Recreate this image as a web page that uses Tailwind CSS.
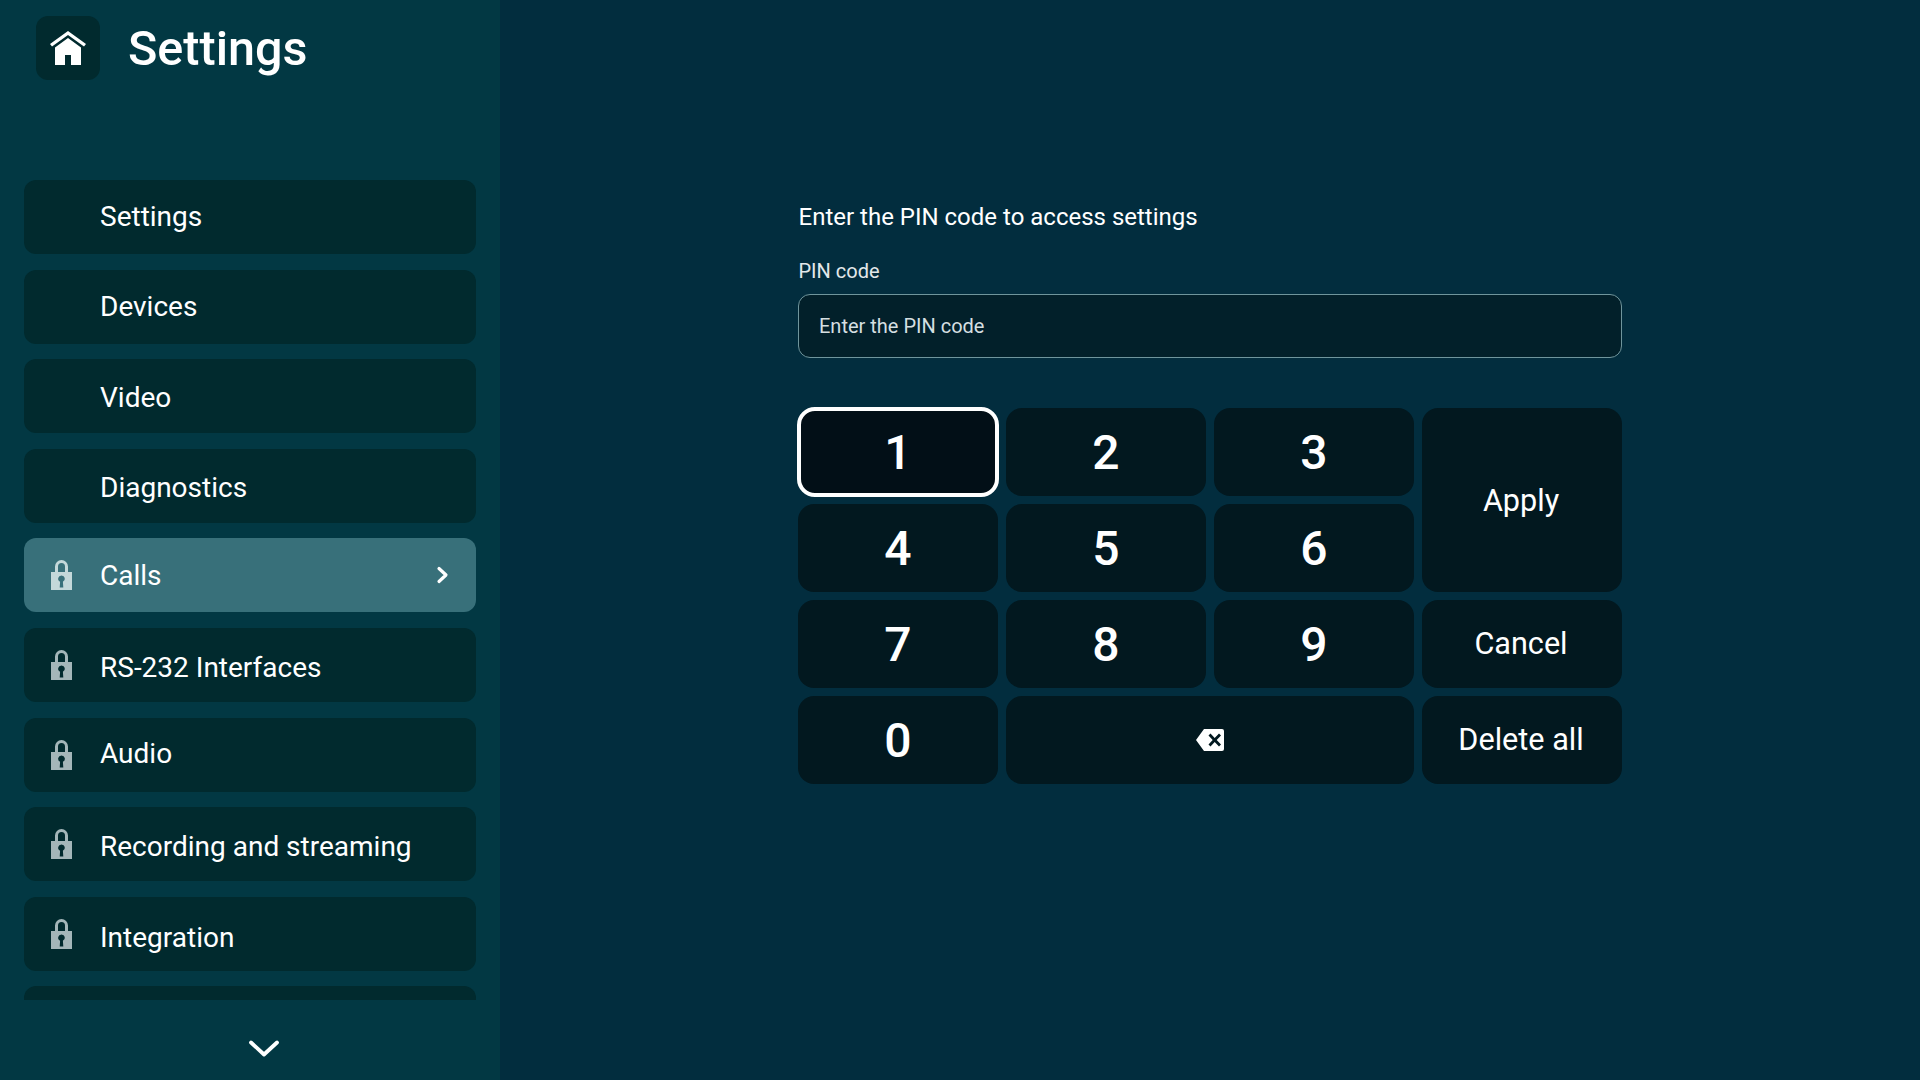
<!DOCTYPE html>
<html lang="en">
 <head>
  <meta charset="utf-8"/>
  <title>Settings</title>
  <script src="https://cdn.jsdelivr.net/npm/@tailwindcss/browser@4"></script>
 </head>
 <body class="w-[1920px] h-[1080px] overflow-hidden bg-[#022d3e] text-white font-['Roboto',sans-serif]">
  <div class="flex h-full">
   <!-- sidebar -->
   <aside class="w-[500px] h-full flex flex-col bg-[#023843] shrink-0">
    <div class="h-[180px] pt-4 pl-9 flex items-start gap-7 shrink-0">
     <div class="w-16 h-16 rounded-xl bg-[#012a2e] flex items-center justify-center">
      <svg class="w-10 h-10" viewBox="0 0 40 40" fill="#fff">
       <path d="M20 3 38 16 36 18.500 20 7 4 18.500 2 16Z"/>
       <path d="M20 10 33 19.500V37H23V27H17V37H7V19.500Z"/>
      </svg>
     </div>
     <h1 class="text-[48.500px] leading-[64px] font-medium mt-[1px]">Settings</h1>
    </div>
    <nav class="h-[820px] overflow-hidden px-6 flex flex-col gap-[15.6px] shrink-0">
     <a class="h-[74px] shrink-0 rounded-xl bg-[#012a2e] flex items-center pl-[76px] text-[28px]">Settings</a>
     <a class="h-[74px] shrink-0 rounded-xl bg-[#012a2e] flex items-center pl-[76px] text-[28px]">Devices</a>
     <a class="h-[74px] shrink-0 rounded-xl bg-[#012a2e] flex items-center pl-[76px] text-[28px]"><span class="pt-[4px]">Video</span></a>
     <a class="h-[74px] shrink-0 rounded-xl bg-[#012a2e] flex items-center pl-[76px] text-[28px]"><span class="pt-[4px]">Diagnostics</span></a>
     <a class="h-[74px] shrink-0 rounded-xl bg-[#38707a] flex items-center pl-[27px] pr-6 text-[28px]">
      <svg class="w-[21px] h-[30px] mr-7 text-[#c4d8da]" viewBox="0 0 21 30"><path fill="currentColor" fill-rule="evenodd" d="M4 12V6.500a6.500 6.500 0 0 1 13 0V12H21V30H0V12ZM7 12H14V6.500a3.500 3.500 0 0 0-7 0ZM10.500 15.500a3.300 3.300 0 0 0-1.400 6.300L8.700 27.500h3.600L11.900 21.800A3.300 3.300 0 0 0 10.500 15.500Z"/></svg>
      <span class="flex-1 pt-[2px]">Calls</span>
      <svg class="w-5 h-5" viewBox="0 0 20 20" fill="none" stroke="#fff" stroke-width="3.2" stroke-linecap="round" stroke-linejoin="round"><path d="M7 3.500 14 10 7 16.500"/></svg>
     </a>
     <a class="h-[74px] shrink-0 rounded-xl bg-[#012a2e] flex items-center pl-[27px] text-[28px]">
      <svg class="w-[21px] h-[30px] mr-7 text-[#a4b6b9]" viewBox="0 0 21 30"><path fill="currentColor" fill-rule="evenodd" d="M4 12V6.500a6.500 6.500 0 0 1 13 0V12H21V30H0V12ZM7 12H14V6.500a3.500 3.500 0 0 0-7 0ZM10.500 15.500a3.300 3.300 0 0 0-1.400 6.300L8.700 27.500h3.600L11.900 21.800A3.300 3.300 0 0 0 10.500 15.500Z"/></svg>
      <span class="pt-[7px]">RS-232 Interfaces</span>
     </a>
     <a class="h-[74px] shrink-0 rounded-xl bg-[#012a2e] flex items-center pl-[27px] text-[28px]">
      <svg class="w-[21px] h-[30px] mr-7 text-[#a4b6b9]" viewBox="0 0 21 30"><path fill="currentColor" fill-rule="evenodd" d="M4 12V6.500a6.500 6.500 0 0 1 13 0V12H21V30H0V12ZM7 12H14V6.500a3.500 3.500 0 0 0-7 0ZM10.500 15.500a3.300 3.300 0 0 0-1.400 6.300L8.700 27.500h3.600L11.900 21.800A3.300 3.300 0 0 0 10.500 15.500Z"/></svg>
      <span class="pb-[2px]">Audio</span>
     </a>
     <a class="h-[74px] shrink-0 rounded-xl bg-[#012a2e] flex items-center pl-[27px] text-[28px]">
      <svg class="w-[21px] h-[30px] mr-7 text-[#a4b6b9]" viewBox="0 0 21 30"><path fill="currentColor" fill-rule="evenodd" d="M4 12V6.500a6.500 6.500 0 0 1 13 0V12H21V30H0V12ZM7 12H14V6.500a3.500 3.500 0 0 0-7 0ZM10.500 15.500a3.300 3.300 0 0 0-1.400 6.300L8.700 27.500h3.600L11.900 21.800A3.300 3.300 0 0 0 10.500 15.500Z"/></svg>
      <span class="pt-[5px]">Recording and streaming</span>
     </a>
     <a class="h-[74px] shrink-0 rounded-xl bg-[#012a2e] flex items-center pl-[27px] text-[28px]">
      <svg class="w-[21px] h-[30px] mr-7 text-[#a4b6b9]" viewBox="0 0 21 30"><path fill="currentColor" fill-rule="evenodd" d="M4 12V6.500a6.500 6.500 0 0 1 13 0V12H21V30H0V12ZM7 12H14V6.500a3.500 3.500 0 0 0-7 0ZM10.500 15.500a3.300 3.300 0 0 0-1.400 6.300L8.700 27.500h3.600L11.900 21.800A3.300 3.300 0 0 0 10.500 15.500Z"/></svg>
      <span class="pt-[8px]">Integration</span>
     </a>
     <a class="h-[74px] shrink-0 rounded-xl bg-[#012a2e]"></a>
    </nav>
    <div class="flex-1 flex items-center justify-center pl-[28px] pt-[18px]">
     <svg class="w-8 h-5" viewBox="0 0 32 20" fill="none" stroke="#fff" stroke-width="3.800" stroke-linecap="round" stroke-linejoin="round"><path d="M3 3.500 16 15.500 29 3.500"/></svg>
    </div>
   </aside>
   <!-- pin form -->
   <main class="flex-1 pl-[298px] pt-[201px]">
    <div class="w-[824px]">
     <p class="text-2xl leading-8 pl-[0.5px]">Enter the PIN code to access settings</p>
     <label class="block mt-[24px] text-xl leading-7 pl-[0.5px] text-[#e2e8ea]">PIN code</label>
     <div class="mt-[9px] h-16 rounded-xl border border-[#6f959c] bg-[#02202a] flex items-center pl-5 text-xl text-[#d5dfe1]">Enter the PIN code</div>
     <div class="mt-[50px] grid grid-cols-4 grid-rows-[88px_88px_88px_88px] gap-2">
      <button class="-m-[1px] pt-[2px] rounded-[18px] bg-[#020f17] border-4 border-white text-[48px] font-medium">1</button>
      <button class="pt-[2px] rounded-2xl bg-[#02181f] text-[48px] font-medium">2</button>
      <button class="pt-[2px] rounded-2xl bg-[#02181f] text-[48px] font-medium">3</button>
      <button class="pr-[2px] pt-[2px] row-span-2 rounded-2xl bg-[#02181f] text-[30.6px]">Apply</button>
      <button class="pt-[2px] rounded-2xl bg-[#02181f] text-[48px] font-medium">4</button>
      <button class="pt-[2px] rounded-2xl bg-[#02181f] text-[48px] font-medium">5</button>
      <button class="pt-[2px] rounded-2xl bg-[#02181f] text-[48px] font-medium">6</button>
      <button class="pt-[2px] rounded-2xl bg-[#02181f] text-[48px] font-medium">7</button>
      <button class="pt-[2px] rounded-2xl bg-[#02181f] text-[48px] font-medium">8</button>
      <button class="pt-[2px] rounded-2xl bg-[#02181f] text-[48px] font-medium">9</button>
      <button class="pr-[2px] rounded-2xl bg-[#02181f] text-[30.6px]">Cancel</button>
      <button class="pt-[2px] rounded-2xl bg-[#02181f] text-[48px] font-medium">0</button>
      <button class="col-span-2 rounded-2xl bg-[#02181f] flex items-center justify-center">
       <svg class="w-[30px] h-[24px]" viewBox="0 0 30 24"><path fill="#fff" fill-rule="evenodd" d="M9 1H27a2 2 0 0 1 2 2V21a2 2 0 0 1-2 2H9L1 12ZM13.500 7.500 17.700 12 13.500 16.500 15.500 18.500 19.700 14 24 18.500 26 16.500 21.700 12 26 7.500 24 5.500 19.700 10 15.500 5.500Z"/></svg>
      </button>
      <button class="pr-[2px] rounded-2xl bg-[#02181f] text-[30.6px]">Delete all</button>
     </div>
    </div>
   </main>
  </div>
 </body>
</html>
